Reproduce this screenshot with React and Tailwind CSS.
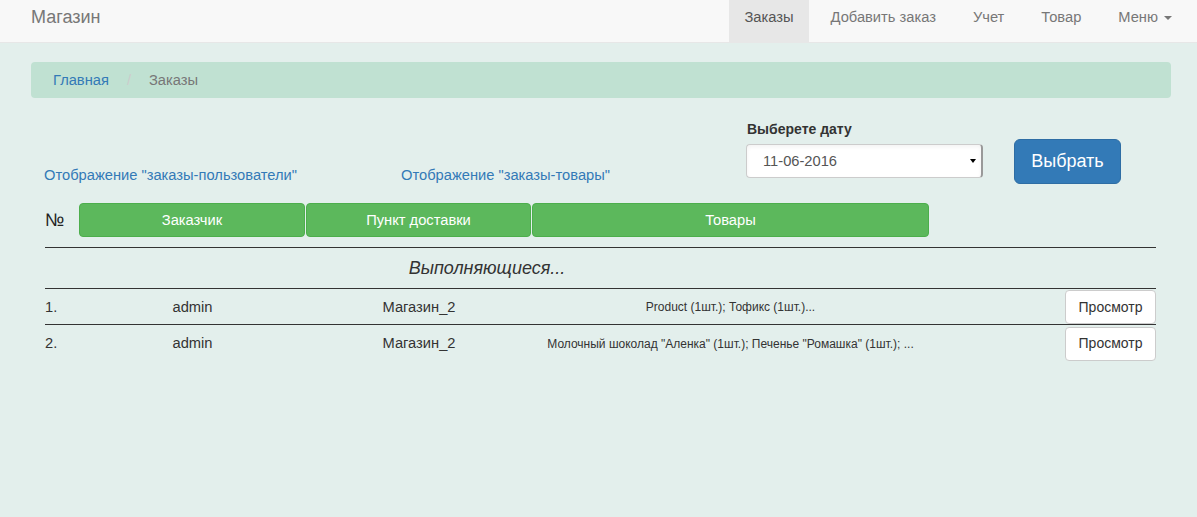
import React from "react"

const navItems = ["Заказы", "Добавить заказ", "Учет", "Товар"]

const orders = [
  { n: "1.", user: "admin", shop: "Магазин_2", goods: "Product (1шт.); Тофикс (1шт.)..." },
  { n: "2.", user: "admin", shop: "Магазин_2", goods: 'Молочный шоколад "Аленка" (1шт.); Печенье "Ромашка" (1шт.); ...' },
]

export default function App() {
  return (
    <div className="min-h-screen bg-[#e3efec] text-[14.7px] text-[#333]" style={{ fontFamily: '"Liberation Sans", Arial, sans-serif' }}>
      {/* Navbar */}
      <nav className="h-[43px] bg-[#f8f8f8] border-b border-[#e7e7e7] flex">
        <div className="pl-[31px] pt-[6px] text-[18px] leading-[22px] text-[#777]">Магазин</div>
        <ul className="ml-auto flex gap-[7px] pr-[10px]">
          {navItems.map((item, i) => (
            <li
              key={item}
              className={`h-[42px] px-[15px] pt-[7px] leading-[20px] ${i === 0 ? "bg-[#e7e7e7] text-[#555]" : "text-[#777]"}`}
            >
              {item}
            </li>
          ))}
          <li className="h-[42px] px-[15px] pt-[7px] leading-[20px] text-[#777] flex items-start gap-[6px]">
            Меню
            <span className="mt-[9px] w-0 h-0 border-x-[4px] border-x-transparent border-t-[4px] border-t-[#777]"></span>
          </li>
        </ul>
      </nav>

      {/* Breadcrumb */}
      <div className="ml-[31px] mr-[26px] mt-[19px] h-[36px] rounded bg-[#c0e1d2] px-[22px] flex items-center">
        <span className="text-[#337ab7]">Главная</span>
        <span className="text-[#ccc] px-[18px]">/</span>
        <span className="text-[#777]">Заказы</span>
      </div>

      {/* Filters */}
      <div className="mt-[21px] h-[84px] flex items-start pl-[44px]">
        <a className="w-[357px] mt-[46px] leading-[20px] text-[#337ab7]">Отображение "заказы-пользователи"</a>
        <a className="w-[345px] mt-[46px] leading-[20px] text-[#337ab7]">Отображение "заказы-товары"</a>
        <div className="w-[237px]">
          <div className="font-bold text-[14px] leading-[20px] pl-px">Выберете дату</div>
          <div className="mt-[5px] h-[34px] bg-white border border-[#ccc] border-r-[2px] border-r-[#999] rounded flex items-center pl-[16px] pr-[5px] shadow-inner">
            <span className="flex-1 text-[#555]">11-06-2016</span>
            <span className="w-0 h-0 border-x-[3px] border-x-transparent border-t-[4px] border-t-black"></span>
          </div>
        </div>
        <button className="ml-[31px] mt-[20px] w-[107px] h-[45px] bg-[#337ab7] border border-[#2e6da4] rounded-md text-white text-[18px]">
          Выбрать
        </button>
      </div>

      {/* Table */}
      <div className="ml-[45px] w-[1111px]">
        <div className="flex h-[34px] items-stretch">
          <div className="w-[34px] flex items-center text-[18px] text-[#222]">№</div>
          <div className="flex gap-px">
            <div className="w-[226px] bg-[#5cb85c] border border-[#4cae4c] rounded text-white flex items-center justify-center">Заказчик</div>
            <div className="w-[225px] bg-[#5cb85c] border border-[#4cae4c] rounded text-white flex items-center justify-center">Пункт доставки</div>
            <div className="w-[397px] bg-[#5cb85c] border border-[#4cae4c] rounded text-white flex items-center justify-center">Товары</div>
          </div>
        </div>
        <div className="mt-[10px] border-t border-[#333]"></div>
        <div className="h-[40px] w-[884px] flex items-center justify-center text-[18px] italic text-[#333]">Выполняющиеся...</div>
        <div className="border-t border-[#333]"></div>
        {orders.map((o, i) => (
          <div key={o.n} className={`flex items-center h-[36px] pt-px ${i === 0 ? "border-b border-[#333]" : ""}`}>
            <div className="w-[34px]">{o.n}</div>
            <div className="w-[227px] text-center">{o.user}</div>
            <div className="w-[226px] text-center">{o.shop}</div>
            <div className="w-[397px] text-center text-[12px]">{o.goods}</div>
            <div className="flex-1 flex justify-end">
              <button className="w-[91px] h-[34px] bg-white border border-[#ccc] rounded text-[14px] text-[#333]">Просмотр</button>
            </div>
          </div>
        ))}
      </div>
    </div>
  )
}
